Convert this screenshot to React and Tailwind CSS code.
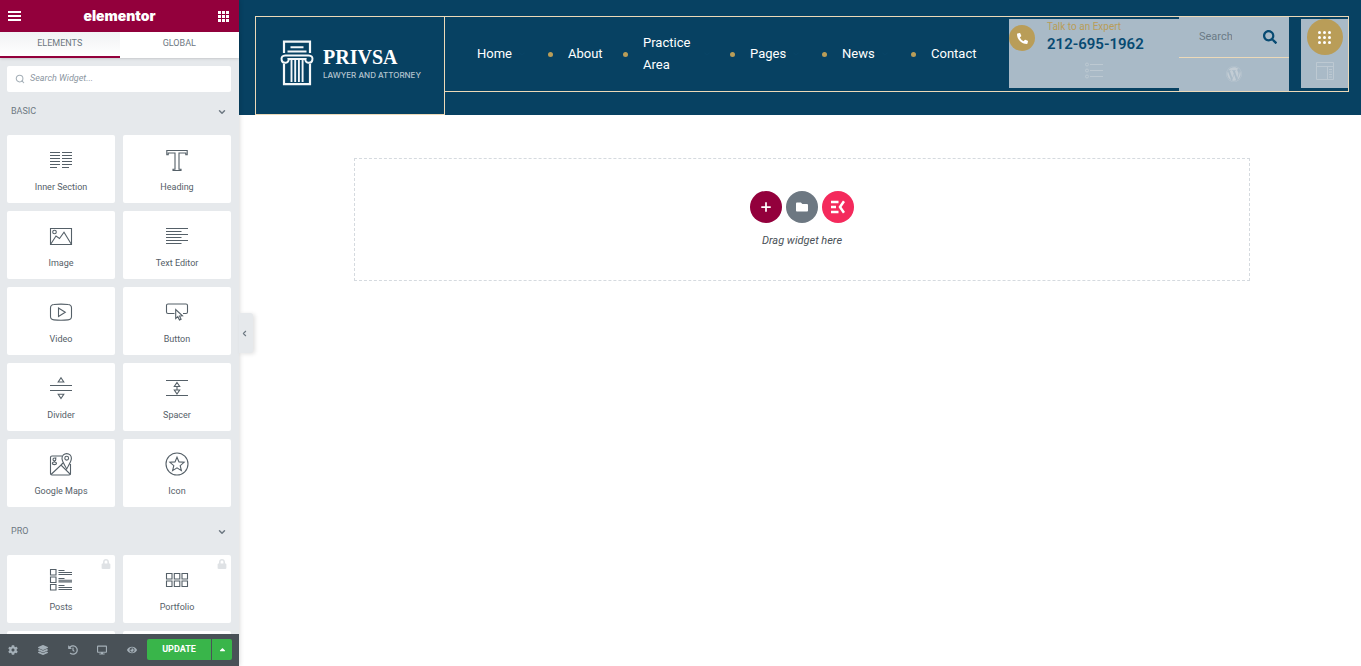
import React from 'react';
import { FaCog, FaLayerGroup, FaHistory, FaDesktop, FaEye, FaLock, FaPhoneAlt, FaSearch, FaWordpress, FaCaretUp, FaFolder } from 'react-icons/fa';
import { Search, ChevronDown, ChevronLeft, Plus } from 'lucide-react';

const drawings = {
  'Inner Section': (
    <path d="M1 4.5h10M13 4.5h10M1 7.5h10M13 7.5h10M1 10.5h10M13 10.5h10M1 13.5h10M13 13.5h10M1 16.5h10M13 16.5h10M1 19.5h7M13 19.5h7" />
  ),
  Heading: <path d="M1.8 2.5h20.4v4.3h-1.4V5H14v16.3h2v1.2H8v-1.2h2V5H3.2v1.8H1.8Z" />,
  Image: (
    <>
      <path d="M1.5 4.5h21v16h-21Z" />
      <circle cx="5.5" cy="8" r="1.8" />
      <path d="M1.5 20.5 7 12l3.5 2.5L15 8.3l7.5 12.2" />
    </>
  ),
  'Text Editor': <path d="M1 4.5h22M1 7.5h15.5M1 10.5h22M1 13.5h15.5M1 16.5h22M1 19.5h15.5" />,
  Video: (
    <>
      <path d="M5 4.5Q12 3.700 19 4.500Q22.500 4.700 22.500 8V16.500Q22.500 19.600 19 19.900Q12 20.600 5 19.900Q1.500 19.600 1.500 16.500V8Q1.500 4.700 5 4.500Z" />
      <path d="M9.500 8v8.500l6.800-4.250Z" />
    </>
  ),
  Button: (
    <>
      <path d="M9.500 13.500H3a1.500 1.500 0 0 1-1.500-1.500V5.500A1.500 1.500 0 0 1 3 4h18a1.500 1.500 0 0 1 1.500 1.500V12a1.500 1.500 0 0 1-1.500 1.500h-3" />
      <path d="M10.700 9.500v9l2.100-1.800 1.700 3.400 1.600-.8-1.600-3.300 3-.2Z" />
    </>
  ),
  Divider: <path d="M1 9.500h22M1 14.500h22M12 1.700l2.800 4.300H9.200ZM12 22.500l2.800-4.300H9.200Z" />,
  Spacer: <path d="M1 4.500h22M1 19.500h22M12 6.500l2.700 4H9.300ZM12 18l2.700-4H9.300ZM12 10.500V14" />,
  'Google Maps': (
    <>
      <path d="M13 4H3a1.500 1.500 0 0 0-1.500 1.500v16A1.500 1.500 0 0 0 3 23h17a1.500 1.500 0 0 0 1.500-1.500V12" />
      <path d="m2 22.500 10-9.500 9.500 9.500M12 13l2-2" />
      <path d="M17.700 17c-2-4-4.700-7.500-4.700-10.700a4.700 4.700 0 0 1 9.400 0c0 3.200-2.700 6.700-4.700 10.700Z" />
      <circle cx="17.700" cy="6.200" r="1.900" />
      <circle cx="5.400" cy="7.400" r="1.400" />
      <ellipse cx="5.400" cy="11.300" rx="2.100" ry="1.300" />
      <path d="M6 6h1.500M5.400 8.800v1.200" />
    </>
  ),
  Icon: (
    <>
      <circle cx="12" cy="12" r="11" />
      <path d="m12 5.200 2 4.700 5.100.4-3.900 3.300 1.200 5L12 15.900l-4.400 2.700 1.200-5-3.900-3.300 5.100-.4Z" />
    </>
  ),
  Posts: (
    <>
      <path d="M1.500 1.500h5.500v5.500H1.500ZM1.500 9h5.500v5.500H1.500ZM1.500 16.500h5.500v5.500H1.500Z" />
      <path d="M9.500 2.500h6M9.500 6.500H23M9.500 4.500H23M9.500 10.500h6M9.500 12.200H23M9.500 13.900H23M9.500 17.500h6M9.500 19.500H23M9.500 21.500H23" />
    </>
  ),
  Portfolio: (
    <path d="M1.500 5.500H7v5.500H1.500ZM9.300 5.500h5.500v5.500H9.300ZM17 5.500h5.500v5.500H17ZM1.500 13H7v5.500H1.500ZM9.300 13h5.500v5.500H9.300ZM17 13h5.500v5.500H17Z" />
  ),
};

function Widget({ name, locked }) {
  return (
    <button type="button" className="relative flex h-[68px] flex-col items-center rounded-[2px] bg-white pt-[13px] text-[#556068]">
      <svg viewBox="0 0 24 24" className="size-6" fill="none" stroke="currentColor" strokeWidth="1.100" aria-hidden="true">
        {drawings[name]}
      </svg>
      <span className="mt-2 text-[9px] leading-[14px]">{name}</span>
      {locked && <FaLock className="absolute right-1 top-1 size-[10px] text-[#dfe2e5]" />}
    </button>
  );
}

function WidgetGroup({ title, names, locked }) {
  return (
    <section className="pb-[5px]">
      <button type="button" className="mb-1 flex h-[39px] w-full items-center justify-between px-1 text-[9px] text-[#6d7882]">
        {title}
        <ChevronDown className="size-[10px]" strokeWidth={3.500} />
      </button>
      <div className="grid grid-cols-2 gap-2">
        {names.map((name) => (
          <Widget key={name} name={name} locked={locked} />
        ))}
      </div>
    </section>
  );
}

function Sidebar() {
  const tools = [
    ['Settings', FaCog],
    ['Navigator', FaLayerGroup],
    ['History', FaHistory],
    ['Responsive mode', FaDesktop],
    ['Preview', FaEye],
  ];
  return (
    <aside className="relative z-10 flex h-screen w-[239px] shrink-0 flex-col bg-[#e6e9ec] font-['Roboto',sans-serif] shadow-[0_0_5px_rgba(0,0,0,0.2)]">
      <div className="flex h-8 shrink-0 items-center justify-between bg-[#93003c] px-2 text-white">
        <button type="button" aria-label="Menu" className="flex h-4 w-[13px] flex-col justify-center gap-[2px]">
          <span className="h-[2px] w-full bg-white" />
          <span className="h-[2px] w-full bg-white" />
          <span className="h-[2px] w-full bg-white" />
        </button>
        <span className="font-['Inter',sans-serif] text-[14px] font-black leading-4">elementor</span>
        <button type="button" aria-label="Widgets" className="grid grid-cols-3 gap-[1px] pr-[2px]">
          {Array.from({ length: 9 }, (_, i) => (
            <span key={i} className="size-[3px] bg-white" />
          ))}
        </button>
      </div>
      <div className="grid h-[26px] shrink-0 grid-cols-2 bg-white text-[9px] text-[#6d7882] shadow-sm">
        <button type="button" className="border-b-2 border-[#93003c] bg-linear-to-b from-[#f1f2f4] to-white">ELEMENTS</button>
        <button type="button" className="border-b-2 border-transparent">GLOBAL</button>
      </div>
      <div className="min-h-0 flex-1 overflow-hidden pl-[7px] pr-2 pt-2">
        <label className="flex h-[26px] items-center gap-[5px] rounded-[2px] bg-white px-2 text-[#a4afb7]">
          <Search className="size-[10px]" strokeWidth={2.500} />
          <input aria-label="Search Widget" placeholder="Search Widget..." className="min-w-0 flex-1 text-[9px] italic outline-none placeholder:text-[#8b969f]" />
        </label>
        <WidgetGroup
          title="BASIC"
          names={['Inner Section', 'Heading', 'Image', 'Text Editor', 'Video', 'Button', 'Divider', 'Spacer', 'Google Maps', 'Icon']}
        />
        <WidgetGroup title="PRO" names={['Posts', 'Portfolio']} locked />
        <div className="-mt-[5px] grid grid-cols-2 gap-2 pt-2">
          <div className="h-[68px] rounded-[2px] bg-white" />
          <div className="h-[68px] rounded-[2px] bg-white" />
        </div>
      </div>
      <div className="flex h-8 shrink-0 items-center bg-[#495157] pb-px pr-[7px] text-[#a4afb7]">
        <div className="flex h-full flex-1 items-center justify-between pl-2 pr-[10px]">
          {tools.map(([label, Icon]) => (
            <button key={label} type="button" aria-label={label} className="flex h-full items-center">
              <Icon className="size-[10px]" />
            </button>
          ))}
        </div>
        <button type="button" className="h-[21px] w-16 rounded-l-[2px] bg-[#39b54a] text-[9px] font-bold text-white">UPDATE</button>
        <button type="button" aria-label="Save options" className="ml-px flex h-[21px] w-5 items-center justify-center rounded-r-[2px] bg-[#39b54a] text-white">
          <FaCaretUp className="size-[9px]" />
        </button>
      </div>
      <button
        type="button"
        aria-label="Hide panel"
        className="absolute left-full top-1/2 -mt-5 flex h-10 w-[14px] items-center justify-center rounded-r-[3px] bg-[#e6e9ec] pr-[3px] text-[#6d7882] shadow-[2px_1px_4px_rgba(0,0,0,0.12)]"
      >
        <ChevronLeft className="size-[9px]" strokeWidth={3} />
      </button>
    </aside>
  );
}

function PillarLogo() {
  return (
    <svg viewBox="0 0 34 46" className="h-[46px] w-[34px] shrink-0" fill="none" stroke="#f3f7f9" strokeWidth="2.200" aria-hidden="true">
      <path d="M4 13V1.600h26V13" />
      <path d="M10.500 7.300h13M7.500 11.500h19" strokeWidth="2" />
      <path d="M8.500 19c1 4.500-6 5-6.800 1.200-.8-3 1-4.700 3.500-4.700h23.600c2.500 0 4.300 1.700 3.500 4.700-.8 3.800-7.800 3.300-6.800-1.200ZM8.500 19h17" strokeWidth="2" />
      <path d="M4 24v20.200h26V24" />
      <path d="M11.500 20v22M15.200 20v22M18.900 20v22M22.600 20v22" strokeWidth="1.900" />
    </svg>
  );
}

function NavItem({ children, width, arrow, dot = true }) {
  return (
    <li className={`flex shrink-0 items-center ${width}`}>
      <a href="#" className={arrow === 'wide' ? 'w-[54px]' : ''}>{children}</a>
      {arrow && <ChevronDown className="ml-[5px] size-[10px] text-[#0a4768]" strokeWidth={1.500} />}
      {dot && <span className="ml-auto mr-[15px] size-[5px] rounded-full bg-[#b99d58]" />}
    </li>
  );
}

function SiteHeader() {
  return (
    <header className="flex h-[115px] items-start bg-[#074162] pl-4 pr-3 pt-4 font-['Roboto',sans-serif]">
      <a href="#" className="flex h-[99px] w-[190px] shrink-0 items-center gap-[9px] border border-[#ecd9b8] pb-[5px] pl-6 text-white">
        <PillarLogo />
        <span className="block">
          <span className="block font-['Liberation_Serif',serif] text-[20px] font-bold leading-5">PRIVSA</span>
          <span className="mt-[3px] block whitespace-nowrap font-['Inter',sans-serif] text-[8px] font-medium leading-[10px] text-[#b4c4cf]">LAWYER AND ATTORNEY</span>
        </span>
      </a>
      <div className="flex h-[76px] min-w-0 flex-1 border-y border-r border-[#ecd9b8]">
        <nav className="min-w-0 flex-1 pl-8">
          <ul className="flex h-full items-center text-[13px] leading-[22px] text-white">
            <NavItem width="w-[91px]" arrow="normal">Home</NavItem>
            <NavItem width="w-[75px]">About</NavItem>
            <NavItem width="w-[107px]" arrow="wide">Practice Area</NavItem>
            <NavItem width="w-[92px]" arrow="normal">Pages</NavItem>
            <NavItem width="w-[89px]" arrow="normal">News</NavItem>
            <NavItem width="w-[50px]" dot={false}>Contact</NavItem>
          </ul>
        </nav>
        <div className="mt-[2px] h-[69px] w-[170px] shrink-0 bg-[#a9bac7]">
          <div className="flex items-start">
            <span className="mt-[6px] flex size-[26px] items-center justify-center rounded-full bg-[#b99d58] text-white">
              <FaPhoneAlt className="size-[11px]" />
            </span>
            <div className="ml-3">
              <p className="text-[10px] leading-4 text-[#b99d58]">Talk to an Expert</p>
              <p className="text-[15px] font-semibold leading-[18px] text-[#074a72]">212-695-1962</p>
            </div>
          </div>
          <svg viewBox="0 0 18 17" className="mx-auto mt-[9px] h-[17px] w-[18px]" fill="none" stroke="#bdc9d2" strokeWidth="1" aria-hidden="true">
            <circle cx="2" cy="2.500" r="1.500" /><circle cx="2" cy="8.500" r="1.500" /><circle cx="2" cy="14.500" r="1.500" />
            <path d="M5 2.500h13M5 8.500h13M5 14.500h13" />
          </svg>
        </div>
        <div className="w-[110px] shrink-0 bg-[#a9bac7]">
          <div className="flex h-[41px] items-center justify-between border-b border-[#ecd9b8] pl-5 pr-3">
            <input aria-label="Search" placeholder="Search" className="w-[33px] text-[11px] outline-none placeholder:text-[#6b7a86]" />
            <button type="button" aria-label="Submit search"><FaSearch className="size-[14px] text-[#074a72]" /></button>
          </div>
          <FaWordpress className="mx-auto mt-2 size-4 text-[#c3cdd5]" />
        </div>
        <div className="ml-3 mt-[2px] h-[69px] w-[47px] shrink-0 bg-[#a9bac7]">
          <button type="button" aria-label="Open menu" className="mx-auto flex size-9 items-center justify-center rounded-full bg-[#b99d58]">
            <span className="grid grid-cols-3 gap-[2px]">
              {Array.from({ length: 9 }, (_, i) => (
                <span key={i} className="size-[3px] rounded-full bg-white" />
              ))}
            </span>
          </button>
          <svg viewBox="0 0 18 18" className="mx-auto mt-[7px] size-[18px]" fill="none" stroke="#bdc9d2" strokeWidth="1" aria-hidden="true">
            <path d="M.5.5h17v17H.5ZM.5 4.500h17M11.500 4.500v13M13 7.500h3M13 10h3M13 12.500h3M13 15h3" />
          </svg>
        </div>
      </div>
    </header>
  );
}

export default function App() {
  return (
    <div className="flex min-h-screen bg-white">
      <Sidebar />
      <main className="min-w-0 flex-1">
        <SiteHeader />
        <section className="ml-[115px] mr-[111px] mt-[43px] flex flex-col items-center border border-dashed border-[#d5dadf] pb-[31px] pt-8">
          <div className="flex gap-1 text-white">
            <button type="button" aria-label="Add section" className="flex size-8 items-center justify-center rounded-full bg-[#93003c]">
              <Plus className="size-[14px]" strokeWidth={3} />
            </button>
            <button type="button" aria-label="Add template" className="flex size-8 items-center justify-center rounded-full bg-[#6d7882]">
              <FaFolder className="size-3" />
            </button>
            <button type="button" aria-label="Template library" className="flex size-8 items-center justify-center rounded-full bg-[#f42a5c]">
              <svg viewBox="0 0 14 14" className="size-[14px]" fill="none" stroke="currentColor" strokeWidth="2.500" aria-hidden="true">
                <path d="M0 2h7.500M0 7h5M0 12h7.500M13 1.200 9 7l4 5.800" />
              </svg>
            </button>
          </div>
          <p className="mt-[10px] font-['Roboto',sans-serif] text-[11px] italic leading-4 text-[#495157]">Drag widget here</p>
        </section>
      </main>
    </div>
  );
}
